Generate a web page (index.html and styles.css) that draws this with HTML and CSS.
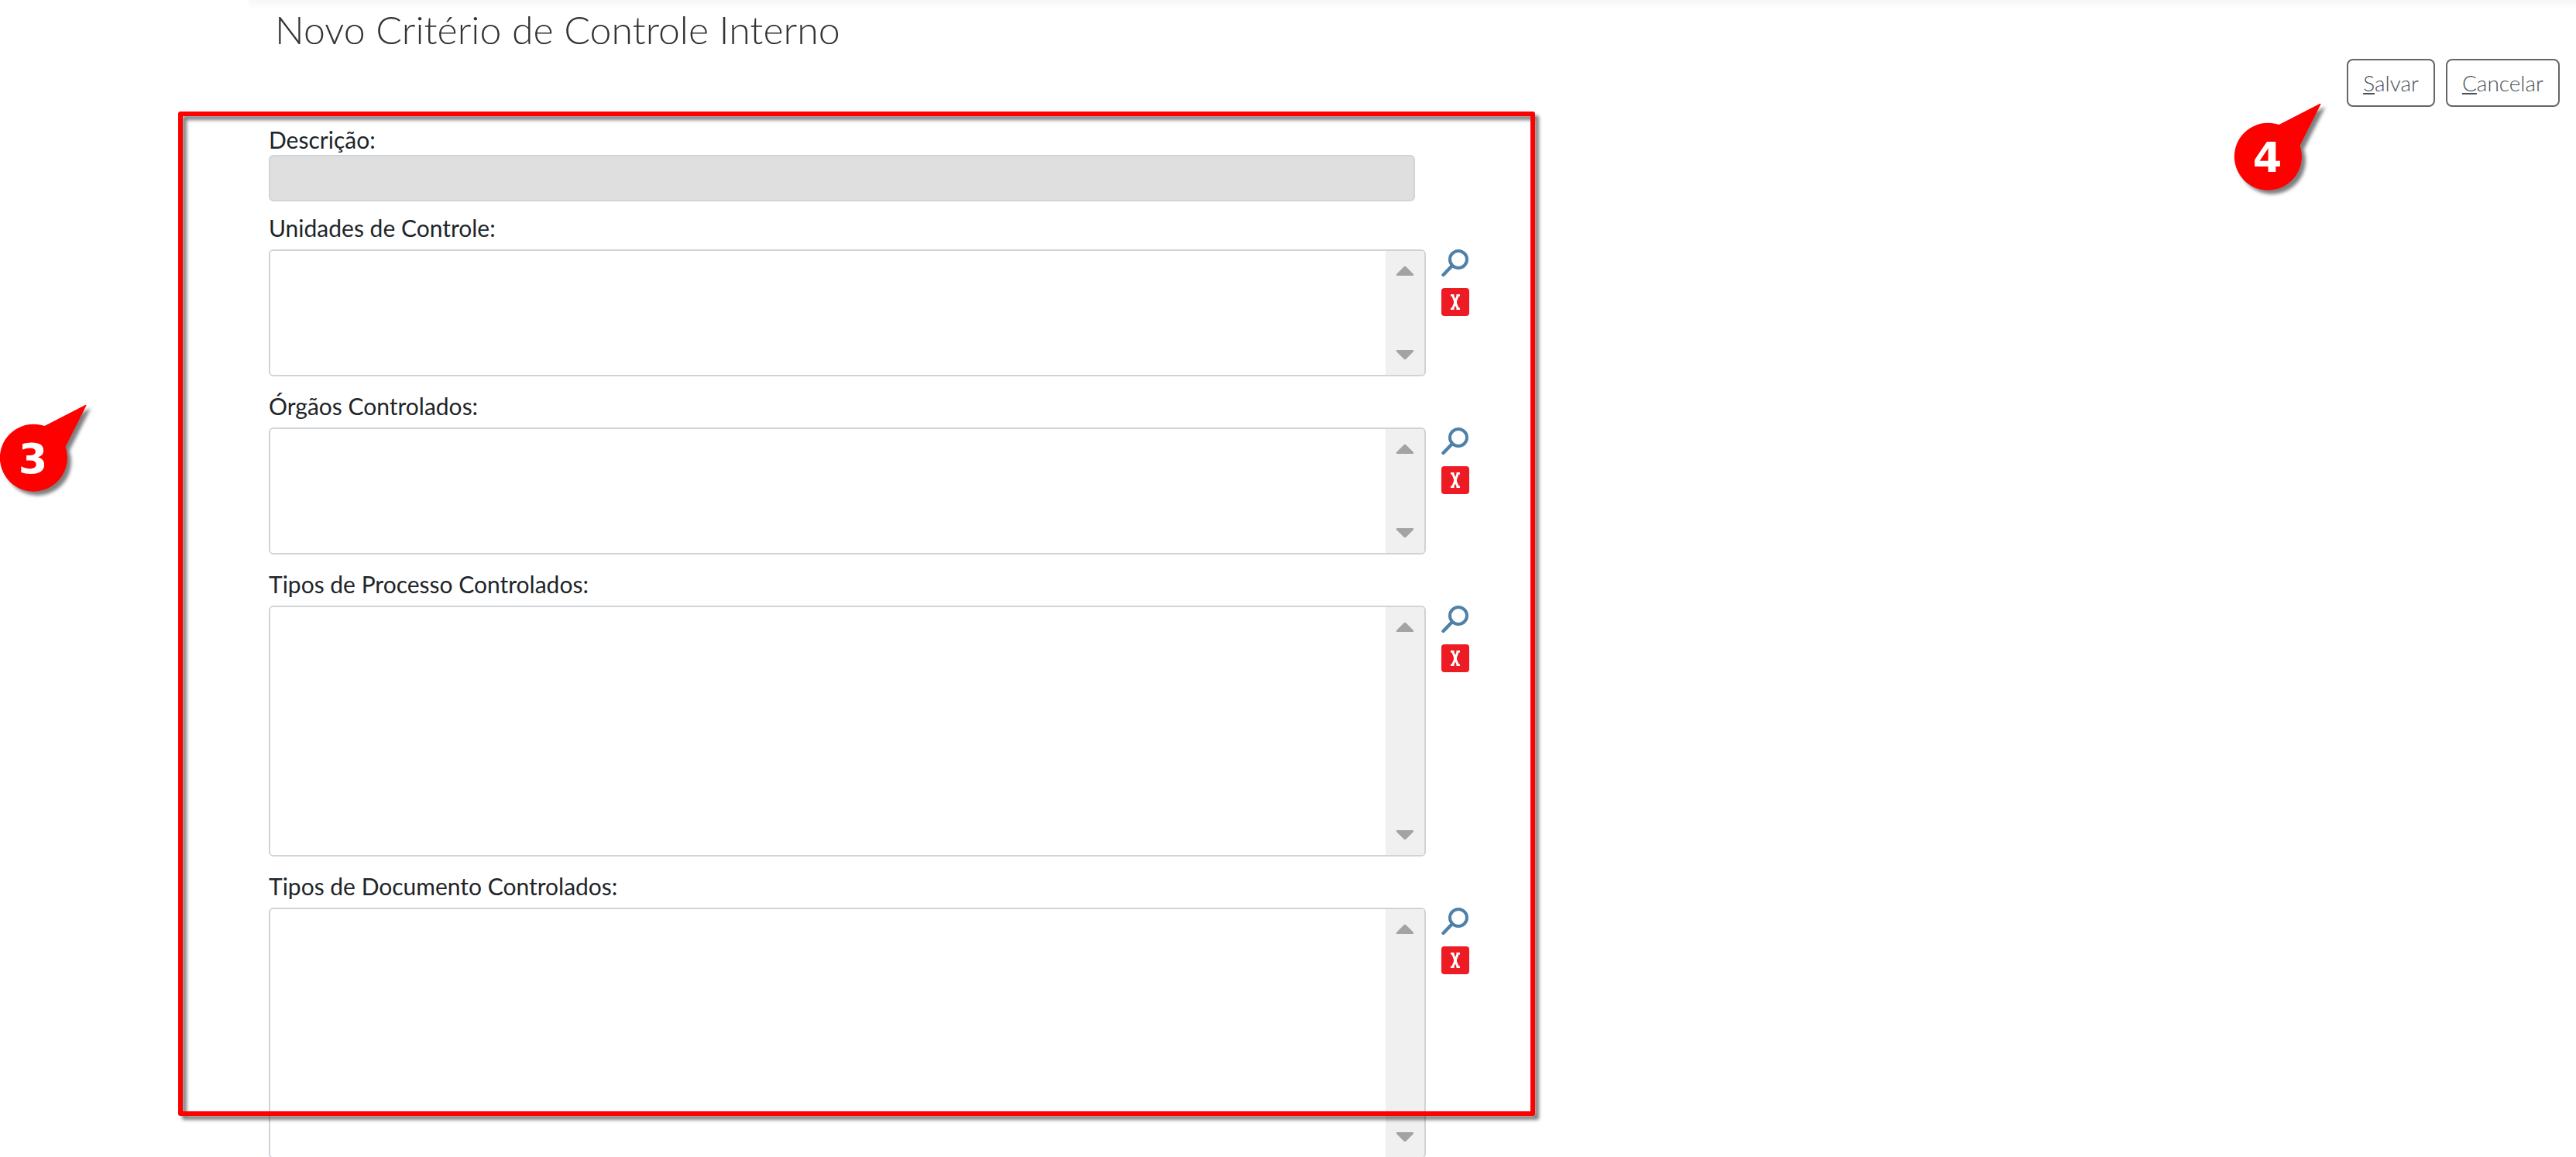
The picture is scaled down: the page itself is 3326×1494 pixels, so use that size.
FILE: index.html
```
<!DOCTYPE html>
<html lang="pt-BR">
<head>
<meta charset="utf-8">
<meta name="viewport" content="width=device-width, initial-scale=1">
<title>Novo Critério de Controle Interno</title>
<link rel="stylesheet" href="styles.css">
</head>
<body>
<svg class="sprite" aria-hidden="true">
  <symbol id="search" viewBox="0 0 36 36">
    <circle cx="22" cy="13" r="11" fill="none" stroke="currentColor" stroke-width="4"/>
    <path d="M13.500 21.500 2.500 33" fill="none" stroke="currentColor" stroke-width="4.400" stroke-linecap="round"/>
  </symbol>
  <symbol id="remove" viewBox="0 0 36 36">
    <rect width="36" height="36" rx="4" fill="#ed1c24"/>
    <path d="M12 8h4.500v2l1.500 4 1.500-4V8H24v2.500h-1.500L20 17v2.500l2.500 6H24V28h-4.500v-2L18 22.500 16.500 26v2H12v-2.500h1.500l2.500-6V17l-2.500-6.500H12z" fill="#fff"/>
  </symbol>
  <symbol id="arrow-up" viewBox="0 0 22 12"><path d="M0 12V10L10 0h2L22 10v2z" fill="#a3a3a3"/></symbol>
  <symbol id="arrow-down" viewBox="0 0 22 12"><path d="M0 0v2L10 12h2L22 2V0z" fill="#a3a3a3"/></symbol>
  <symbol id="balloon" viewBox="0 0 114 114">
    <path d="M112.500 1.500Q113 .5 111 1L58.500 28A43.500 43.500 0 1 0 85.500 55z" fill="#f00"/>
  </symbol>
</svg>

<main class="page">
  <h1 class="title">Novo Critério de Controle Interno</h1>

  <div class="commands">
    <button class="command" type="submit" form="criterio" accesskey="s"><u>S</u>alvar</button>
    <button class="command" type="button" accesskey="c"><u>C</u>ancelar</button>
    <span class="balloon balloon-commands"><svg class="balloon-shape"><use href="#balloon"/></svg><span class="balloon-number">4</span></span>
  </div>

  <form class="form" id="criterio">
    <div class="field field-text">
      <label class="label" for="descricao">Descrição:</label>
      <input class="text-input" id="descricao" type="text">
    </div>

    <div class="field">
      <label class="label" for="unidades">Unidades de Controle:</label>
      <div class="picker">
        <div class="list-box">
          <select class="list" id="unidades" multiple></select>
          <div class="scroll" aria-hidden="true"><svg class="arrow"><use href="#arrow-up"/></svg><svg class="arrow"><use href="#arrow-down"/></svg></div>
        </div>
        <div class="tools">
          <button class="tool" type="button" aria-label="Selecionar Unidades"><svg class="icon"><use href="#search"/></svg></button>
          <button class="tool" type="button" aria-label="Remover Unidades"><svg class="icon"><use href="#remove"/></svg></button>
        </div>
      </div>
    </div>

    <div class="field">
      <label class="label" for="orgaos">Órgãos Controlados:</label>
      <div class="picker">
        <div class="list-box">
          <select class="list" id="orgaos" multiple></select>
          <div class="scroll" aria-hidden="true"><svg class="arrow"><use href="#arrow-up"/></svg><svg class="arrow"><use href="#arrow-down"/></svg></div>
        </div>
        <div class="tools">
          <button class="tool" type="button" aria-label="Selecionar Órgãos"><svg class="icon"><use href="#search"/></svg></button>
          <button class="tool" type="button" aria-label="Remover Órgãos"><svg class="icon"><use href="#remove"/></svg></button>
        </div>
      </div>
    </div>

    <div class="field">
      <label class="label" for="processos">Tipos de Processo Controlados:</label>
      <div class="picker">
        <div class="list-box list-box-tall">
          <select class="list" id="processos" multiple></select>
          <div class="scroll" aria-hidden="true"><svg class="arrow"><use href="#arrow-up"/></svg><svg class="arrow"><use href="#arrow-down"/></svg></div>
        </div>
        <div class="tools">
          <button class="tool" type="button" aria-label="Selecionar Tipos de Processo"><svg class="icon"><use href="#search"/></svg></button>
          <button class="tool" type="button" aria-label="Remover Tipos de Processo"><svg class="icon"><use href="#remove"/></svg></button>
        </div>
      </div>
    </div>

    <div class="field">
      <label class="label" for="documentos">Tipos de Documento Controlados:</label>
      <div class="picker">
        <div class="list-box list-box-tall">
          <select class="list" id="documentos" multiple></select>
          <div class="scroll" aria-hidden="true"><svg class="arrow"><use href="#arrow-up"/></svg><svg class="arrow"><use href="#arrow-down"/></svg></div>
        </div>
        <div class="tools">
          <button class="tool" type="button" aria-label="Selecionar Tipos de Documento"><svg class="icon"><use href="#search"/></svg></button>
          <button class="tool" type="button" aria-label="Remover Tipos de Documento"><svg class="icon"><use href="#remove"/></svg></button>
        </div>
      </div>
    </div>

    <div class="highlight"></div>
    <span class="balloon balloon-form"><svg class="balloon-shape"><use href="#balloon"/></svg><span class="balloon-number">3</span></span>
  </form>
</main>
</body>
</html>
```
FILE: styles.css
```
* {
  box-sizing: border-box;
}

body {
  height: 100vh;
  margin: 0;
  overflow: hidden;
  background: #fff;
  color: #212529;
  font-family: Lato, "Open Sans", sans-serif;
  font-size: 30px;
  line-height: 36px;
}

.sprite {
  display: none;
}

.page {
  margin-left: 321px;
  background: linear-gradient(#f7f7f7, #fff 12px);
}

/* Header */

.title {
  margin: 0;
  padding: 8px 34px;
  color: #333;
  font-size: 50px;
  font-weight: 300;
  line-height: 60px;
}

.commands {
  position: relative;
  display: flex;
  justify-content: flex-end;
  gap: 14px;
  padding-right: 21px;
}

.command {
  height: 62px;
  padding: 0 19px;
  border: 2px solid #666;
  border-radius: 8px;
  background: #fff;
  color: #495057;
  font-family: inherit;
  font-size: 28px;
  font-weight: 300;
}

/* Form */

.form {
  position: relative;
  display: flex;
  flex-direction: column;
  gap: 20px;
  max-width: 1550px;
  margin: 24px 26px 0;
}

.field {
  display: flex;
  flex-direction: column;
  gap: 10px;
}

.field-text {
  gap: 2px;
  margin-bottom: -4px;
}

.label {
  align-self: flex-start;
}

.text-input {
  height: 60px;
  margin-right: 70px;
  padding: 0 12px;
  border: 2px solid #ced4da;
  border-radius: 6px;
  background: #dfdfdf;
  color: inherit;
  font: inherit;
}

.picker {
  display: flex;
  gap: 20px;
}

.list-box {
  flex: 1;
  display: flex;
  height: 164px;
  border: 2px solid #ced4da;
  border-radius: 6px;
  overflow: hidden;
}

.list-box-tall {
  height: 324px;
}

.list {
  flex: 1;
  min-width: 0;
  padding: 0;
  border: 0;
  background: #fff;
  color: inherit;
  font: inherit;
}

.scroll {
  display: flex;
  flex-direction: column;
  justify-content: space-between;
  padding: 20px 14px;
  background: #f0f0f0;
}

.arrow {
  display: block;
  width: 22px;
  height: 12px;
}

.tools {
  display: flex;
  flex-direction: column;
  gap: 14px;
}

.tool {
  padding: 0;
  border: 0;
  background: none;
  color: #4f81a8;
}

.icon {
  display: block;
  width: 36px;
  height: 36px;
}

/* Guide marks laid over the page */

.highlight {
  position: absolute;
  top: -18px;
  right: -85px;
  bottom: 55px;
  left: -117px;
  border: 6px solid #f00;
  border-radius: 3px;
  filter: drop-shadow(5px 5px 2px rgba(0, 0, 0, 0.5));
  pointer-events: none;
}

.balloon {
  position: absolute;
  width: 114px;
  height: 114px;
  pointer-events: none;
}

.balloon-shape {
  display: block;
  width: 114px;
  height: 114px;
  filter: drop-shadow(5px 5px 2px rgba(0, 0, 0, 0.5));
  overflow: visible;
}

.balloon-number {
  position: absolute;
  bottom: 0;
  left: 0;
  width: 87px;
  color: #fff;
  font-family: "DejaVu Sans", sans-serif;
  font-size: 54px;
  font-weight: 700;
  line-height: 87px;
  text-align: center;
}

.balloon-form {
  top: 360px;
  left: -348px;
}

.balloon-commands {
  top: 57px;
  right: 328px;
}
```
